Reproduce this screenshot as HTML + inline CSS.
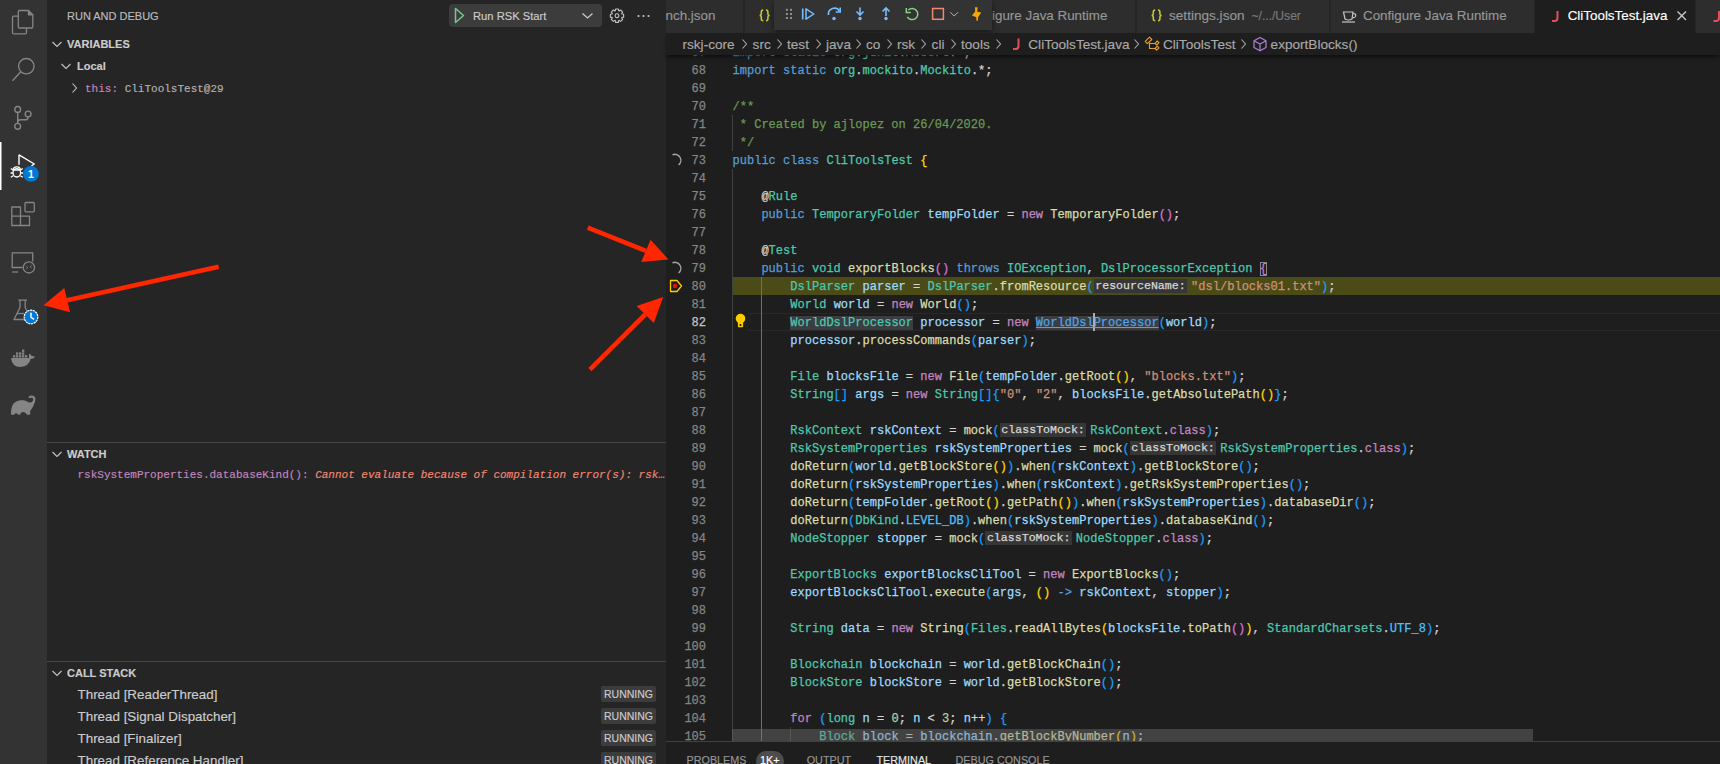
<!DOCTYPE html>
<html><head><meta charset="utf-8">
<style>
*{margin:0;padding:0;box-sizing:border-box}
html,body{width:1720px;height:764px;overflow:hidden;background:#1e1e1e;font-family:"Liberation Sans",sans-serif;color:#ccc}
.t,.tabt,.bc,.badge,.ptab{-webkit-text-stroke:0.15px currentColor}
.abs{position:absolute}
.t{position:absolute;white-space:nowrap}
svg{position:absolute;overflow:visible}
#act{left:0;top:0;width:47px;height:764px;background:#333333}
#side{left:47px;top:0;width:619px;height:764px;background:#252526}
#editor{left:666px;top:0;width:1054px;height:764px;background:#1e1e1e}
#tabs{left:666px;top:0;width:1054px;height:33px;background:#252526}
#crumbs{left:666px;top:33px;width:1054px;height:22px;background:#1e1e1e;box-shadow:0 3px 4px -1px rgba(0,0,0,.55)}
.ln{position:absolute;left:666px;width:40px;-webkit-text-stroke:0.25px currentColor;text-align:right;font-family:"Liberation Mono",monospace;font-size:12px;line-height:18px;height:18px;padding-top:1px;color:#858585}
.lnact{color:#c6c6c6}
.cl{position:absolute;left:732.5px;white-space:pre;font-family:"Liberation Mono",monospace;font-size:12px;letter-spacing:0.02px;-webkit-text-stroke:0.25px currentColor;line-height:18px;height:18px;padding-top:1px;color:#d4d4d4}
.hint{display:inline-block;background:#363636;color:#d8d8d8;height:14px;line-height:14px;font-size:11.6px;letter-spacing:0;padding:0 1.6px;margin-right:3.8px;vertical-align:top;margin-top:1px}
.whl{background:#3a3d41}
.link{text-decoration:underline}
.cur{display:inline-block;width:2px;height:18px;background:#aeafad;vertical-align:top;margin:-1px -1px 0}
.brbox{outline:1px solid #888;outline-offset:-1px}
.hdr{font-weight:bold;font-size:11px;line-height:11px;color:#cccccc}
.ui13{font-size:13.4px;line-height:13.4px}
.tab{position:absolute;top:0;height:33px;background:#2d2d2d;border-right:1px solid #252526}
.tabt{position:absolute;top:9px;font-size:13.4px;line-height:13.4px;white-space:nowrap;color:#969696}
.bc{position:absolute;top:37.5px;font-size:13.6px;line-height:13.6px;white-space:nowrap;color:#a9a9a9}
.badge{position:absolute;left:601px;width:55px;height:16px;background:#3c3c3c;border-radius:2px;font-size:10.5px;line-height:16px;text-align:center;color:#cccccc}
.ptab{position:absolute;top:754.6px;font-size:10.8px;line-height:10.8px;color:#969696;white-space:nowrap}
</style></head><body>
<div id="act" class="abs"></div>
<div id="side" class="abs"></div>
<div id="editor" class="abs"></div>

<!-- sidebar -->
<div class="t" style="left:67px;top:10.9px;font-size:11px;line-height:11px;color:#bbbbbb">RUN AND DEBUG</div>
<div class="abs" style="left:449px;top:4px;width:153px;height:23px;background:#3c3c3c;border-radius:4px"></div>
<svg style="left:0;top:0" width="1" height="1"><path d="M455.5 8.5 L463.5 15.5 L455.5 22.5 Z" fill="none" stroke="#73c991" stroke-width="1.5" stroke-linejoin="round"/></svg>
<div class="t" style="left:473px;top:6.6px;font-size:11.2px;line-height:11.2px;color:#cccccc;top:10.7px">Run RSK Start</div>
<svg style="left:0;top:0" width="1" height="1"><path d="M582.5 13.5 L587.5 18 L592.5 13.5" fill="none" stroke="#cccccc" stroke-width="1.2"/></svg>
<svg style="left:0;top:0" width="1" height="1"><g fill="none" stroke="#c5c5c5" stroke-width="1.1" stroke-linejoin="round"><circle cx="617" cy="15.7" r="1.9"/><path d="M615.30 10.79 L615.56 9.05 L618.44 9.05 L618.70 10.79 L619.27 11.02 L620.68 9.98 L622.72 12.02 L621.68 13.43 L621.91 14.00 L623.65 14.26 L623.65 17.14 L621.91 17.40 L621.68 17.97 L622.72 19.38 L620.68 21.42 L619.27 20.38 L618.70 20.61 L618.44 22.35 L615.56 22.35 L615.30 20.61 L614.73 20.38 L613.32 21.42 L611.28 19.38 L612.32 17.97 L612.09 17.40 L610.35 17.14 L610.35 14.26 L612.09 14.00 L612.32 13.43 L611.28 12.02 L613.32 9.98 L614.73 11.02 Z"/></g></svg>
<svg style="left:0;top:0" width="1" height="1"><g fill="#c5c5c5"><circle cx="638.5" cy="16" r="1.1"/><circle cx="643.5" cy="16" r="1.1"/><circle cx="648.5" cy="16" r="1.1"/></g></svg>

<svg style="left:0;top:0" width="1" height="1"><path d="M52.5 42 L57 46.5 L61.5 42" fill="none" stroke="#c5c5c5" stroke-width="1.1"/></svg>
<div class="t hdr" style="left:67px;top:38.7px">VARIABLES</div>
<svg style="left:0;top:0" width="1" height="1"><path d="M61.5 64 L66 68.5 L70.5 64" fill="none" stroke="#c5c5c5" stroke-width="1.1"/></svg>
<div class="t hdr" style="left:77px;top:60.9px">Local</div>
<svg style="left:0;top:0" width="1" height="1"><path d="M72.5 83.5 L76.5 88 L72.5 92.5" fill="none" stroke="#c5c5c5" stroke-width="1.1"/></svg>
<div class="t" style="left:85px;top:83.5px;font-family:'Liberation Mono',monospace;font-size:11px;line-height:11px"><span style="color:#c586c0">this:</span> <span style="color:#b3b3b3">CliToolsTest@29</span></div>

<div class="abs" style="left:47px;top:442px;width:619px;height:1px;background:#474747"></div>
<svg style="left:0;top:0" width="1" height="1"><path d="M52.5 452 L57 456.5 L61.5 452" fill="none" stroke="#c5c5c5" stroke-width="1.1"/></svg>
<div class="t hdr" style="left:67px;top:448.7px">WATCH</div>
<div class="t" style="left:77.5px;top:470.2px;font-family:'Liberation Mono',monospace;font-size:11px;line-height:11px"><span style="color:#c586c0">rskSystemProperties.databaseKind():</span> <span style="color:#f48771;font-style:italic">Cannot evaluate because of compilation error(s): rsk…</span></div>

<div class="abs" style="left:47px;top:661px;width:619px;height:1px;background:#474747"></div>
<svg style="left:0;top:0" width="1" height="1"><path d="M52.5 671 L57 675.5 L61.5 671" fill="none" stroke="#c5c5c5" stroke-width="1.1"/></svg>
<div class="t hdr" style="left:67px;top:668px">CALL STACK</div>
<div class="t ui13" style="left:77.5px;top:687.7px;color:#cccccc">Thread [ReaderThread]</div>
<div class="t ui13" style="left:77.5px;top:709.7px;color:#cccccc">Thread [Signal Dispatcher]</div>
<div class="t ui13" style="left:77.5px;top:731.7px;color:#cccccc">Thread [Finalizer]</div>
<div class="t ui13" style="left:77.5px;top:753.7px;color:#cccccc">Thread [Reference Handler]</div>
<div class="badge" style="top:686px">RUNNING</div>
<div class="badge" style="top:708px">RUNNING</div>
<div class="badge" style="top:730px">RUNNING</div>
<div class="badge" style="top:752px">RUNNING</div>

<div class="abs" style="left:732px;top:277px;width:988px;height:18px;background:#4b4b18"></div>
<div class="abs" style="left:748px;top:313px;width:972px;height:18px;border-top:1px solid #282828;border-bottom:1px solid #282828"></div>
<div class="abs" style="left:732px;top:115px;width:1px;height:36px;background:#404040"></div>
<div class="abs" style="left:732px;top:169px;width:1px;height:576px;background:#404040"></div>
<div class="abs" style="left:761px;top:277px;width:1px;height:468px;background:#707070"></div>
<div class="abs" style="left:790px;top:727px;width:1px;height:18px;background:#404040"></div>
<div class="ln" style="top:43px">67</div>
<div class="cl" style="top:43px"><span style="color:#569cd6">import</span><span style="color:#d4d4d4"> </span><span style="color:#569cd6">static</span><span style="color:#d4d4d4"> </span><span style="color:#4ec9b0">org</span><span style="color:#d4d4d4">.</span><span style="color:#4ec9b0">junit</span><span style="color:#d4d4d4">.</span><span style="color:#4ec9b0">Assert</span><span style="color:#d4d4d4">.*;</span></div>
<div class="ln" style="top:61px">68</div>
<div class="cl" style="top:61px"><span style="color:#569cd6">import</span><span style="color:#d4d4d4"> </span><span style="color:#569cd6">static</span><span style="color:#d4d4d4"> </span><span style="color:#4ec9b0">org</span><span style="color:#d4d4d4">.</span><span style="color:#4ec9b0">mockito</span><span style="color:#d4d4d4">.</span><span style="color:#4ec9b0">Mockito</span><span style="color:#d4d4d4">.*;</span></div>
<div class="ln" style="top:79px">69</div>
<div class="ln" style="top:97px">70</div>
<div class="cl" style="top:97px"><span style="color:#6a9955">/**</span></div>
<div class="ln" style="top:115px">71</div>
<div class="cl" style="top:115px"><span style="color:#6a9955"> * Created by ajlopez on 26/04/2020.</span></div>
<div class="ln" style="top:133px">72</div>
<div class="cl" style="top:133px"><span style="color:#6a9955"> */</span></div>
<div class="ln" style="top:151px">73</div>
<div class="cl" style="top:151px"><span style="color:#569cd6">public</span><span style="color:#d4d4d4"> </span><span style="color:#569cd6">class</span><span style="color:#d4d4d4"> </span><span style="color:#4ec9b0">CliToolsTest</span><span style="color:#d4d4d4"> </span><span style="color:#ffd700">{</span></div>
<div class="ln" style="top:169px">74</div>
<div class="ln" style="top:187px">75</div>
<div class="cl" style="top:187px"><span style="color:#d4d4d4">    @</span><span style="color:#4ec9b0">Rule</span></div>
<div class="ln" style="top:205px">76</div>
<div class="cl" style="top:205px"><span style="color:#d4d4d4">    </span><span style="color:#569cd6">public</span><span style="color:#d4d4d4"> </span><span style="color:#4ec9b0">TemporaryFolder</span><span style="color:#d4d4d4"> </span><span style="color:#9cdcfe">tempFolder</span><span style="color:#d4d4d4"> = </span><span style="color:#c586c0">new</span><span style="color:#d4d4d4"> </span><span style="color:#dcdcaa">TemporaryFolder</span><span style="color:#da70d6">()</span><span style="color:#d4d4d4">;</span></div>
<div class="ln" style="top:223px">77</div>
<div class="ln" style="top:241px">78</div>
<div class="cl" style="top:241px"><span style="color:#d4d4d4">    @</span><span style="color:#4ec9b0">Test</span></div>
<div class="ln" style="top:259px">79</div>
<div class="cl" style="top:259px"><span style="color:#d4d4d4">    </span><span style="color:#569cd6">public</span><span style="color:#d4d4d4"> </span><span style="color:#4ec9b0">void</span><span style="color:#d4d4d4"> </span><span style="color:#dcdcaa">exportBlocks</span><span style="color:#da70d6">()</span><span style="color:#d4d4d4"> </span><span style="color:#569cd6">throws</span><span style="color:#d4d4d4"> </span><span style="color:#4ec9b0">IOException</span><span style="color:#d4d4d4">, </span><span style="color:#4ec9b0">DslProcessorException</span><span style="color:#d4d4d4"> </span><span class="brbox" style="color:#da70d6">{</span></div>
<div class="ln" style="top:277px">80</div>
<div class="cl" style="top:277px"><span style="color:#d4d4d4">        </span><span style="color:#4ec9b0">DslParser</span><span style="color:#d4d4d4"> </span><span style="color:#9cdcfe">parser</span><span style="color:#d4d4d4"> = </span><span style="color:#4ec9b0">DslParser</span><span style="color:#d4d4d4">.</span><span style="color:#dcdcaa">fromResource</span><span style="color:#179fff">(</span><span class="hint">resourceName:</span><span style="color:#ce9178">&quot;dsl/blocks01.txt&quot;</span><span style="color:#179fff">)</span><span style="color:#d4d4d4">;</span></div>
<div class="ln" style="top:295px">81</div>
<div class="cl" style="top:295px"><span style="color:#d4d4d4">        </span><span style="color:#4ec9b0">World</span><span style="color:#d4d4d4"> </span><span style="color:#9cdcfe">world</span><span style="color:#d4d4d4"> = </span><span style="color:#c586c0">new</span><span style="color:#d4d4d4"> </span><span style="color:#dcdcaa">World</span><span style="color:#179fff">()</span><span style="color:#d4d4d4">;</span></div>
<div class="ln lnact" style="top:313px">82</div>
<div class="cl" style="top:313px"><span style="color:#d4d4d4">        </span><span class="whl" style="color:#4ec9b0">WorldDslProcessor</span><span style="color:#d4d4d4"> </span><span style="color:#9cdcfe">processor</span><span style="color:#d4d4d4"> = </span><span style="color:#c586c0">new</span><span style="color:#d4d4d4"> </span><span class="whl link" style="color:#4fa4e8">WorldDsl<span class="cur"></span>Processor</span><span style="color:#179fff">(</span><span style="color:#9cdcfe">world</span><span style="color:#179fff">)</span><span style="color:#d4d4d4">;</span></div>
<div class="ln" style="top:331px">83</div>
<div class="cl" style="top:331px"><span style="color:#d4d4d4">        </span><span style="color:#9cdcfe">processor</span><span style="color:#d4d4d4">.</span><span style="color:#dcdcaa">processCommands</span><span style="color:#179fff">(</span><span style="color:#9cdcfe">parser</span><span style="color:#179fff">)</span><span style="color:#d4d4d4">;</span></div>
<div class="ln" style="top:349px">84</div>
<div class="ln" style="top:367px">85</div>
<div class="cl" style="top:367px"><span style="color:#d4d4d4">        </span><span style="color:#4ec9b0">File</span><span style="color:#d4d4d4"> </span><span style="color:#9cdcfe">blocksFile</span><span style="color:#d4d4d4"> = </span><span style="color:#c586c0">new</span><span style="color:#d4d4d4"> </span><span style="color:#dcdcaa">File</span><span style="color:#179fff">(</span><span style="color:#9cdcfe">tempFolder</span><span style="color:#d4d4d4">.</span><span style="color:#dcdcaa">getRoot</span><span style="color:#ffd700">()</span><span style="color:#d4d4d4">, </span><span style="color:#ce9178">&quot;blocks.txt&quot;</span><span style="color:#179fff">)</span><span style="color:#d4d4d4">;</span></div>
<div class="ln" style="top:385px">86</div>
<div class="cl" style="top:385px"><span style="color:#d4d4d4">        </span><span style="color:#4ec9b0">String</span><span style="color:#179fff">[]</span><span style="color:#d4d4d4"> </span><span style="color:#9cdcfe">args</span><span style="color:#d4d4d4"> = </span><span style="color:#c586c0">new</span><span style="color:#d4d4d4"> </span><span style="color:#4ec9b0">String</span><span style="color:#179fff">[]{</span><span style="color:#ce9178">&quot;0&quot;</span><span style="color:#d4d4d4">, </span><span style="color:#ce9178">&quot;2&quot;</span><span style="color:#d4d4d4">, </span><span style="color:#9cdcfe">blocksFile</span><span style="color:#d4d4d4">.</span><span style="color:#dcdcaa">getAbsolutePath</span><span style="color:#ffd700">()</span><span style="color:#179fff">}</span><span style="color:#d4d4d4">;</span></div>
<div class="ln" style="top:403px">87</div>
<div class="ln" style="top:421px">88</div>
<div class="cl" style="top:421px"><span style="color:#d4d4d4">        </span><span style="color:#4ec9b0">RskContext</span><span style="color:#d4d4d4"> </span><span style="color:#9cdcfe">rskContext</span><span style="color:#d4d4d4"> = </span><span style="color:#dcdcaa">mock</span><span style="color:#179fff">(</span><span class="hint">classToMock:</span><span style="color:#4ec9b0">RskContext</span><span style="color:#d4d4d4">.</span><span style="color:#c586c0">class</span><span style="color:#179fff">)</span><span style="color:#d4d4d4">;</span></div>
<div class="ln" style="top:439px">89</div>
<div class="cl" style="top:439px"><span style="color:#d4d4d4">        </span><span style="color:#4ec9b0">RskSystemProperties</span><span style="color:#d4d4d4"> </span><span style="color:#9cdcfe">rskSystemProperties</span><span style="color:#d4d4d4"> = </span><span style="color:#dcdcaa">mock</span><span style="color:#179fff">(</span><span class="hint">classToMock:</span><span style="color:#4ec9b0">RskSystemProperties</span><span style="color:#d4d4d4">.</span><span style="color:#c586c0">class</span><span style="color:#179fff">)</span><span style="color:#d4d4d4">;</span></div>
<div class="ln" style="top:457px">90</div>
<div class="cl" style="top:457px"><span style="color:#d4d4d4">        </span><span style="color:#dcdcaa">doReturn</span><span style="color:#179fff">(</span><span style="color:#9cdcfe">world</span><span style="color:#d4d4d4">.</span><span style="color:#dcdcaa">getBlockStore</span><span style="color:#ffd700">()</span><span style="color:#179fff">)</span><span style="color:#d4d4d4">.</span><span style="color:#dcdcaa">when</span><span style="color:#179fff">(</span><span style="color:#9cdcfe">rskContext</span><span style="color:#179fff">)</span><span style="color:#d4d4d4">.</span><span style="color:#dcdcaa">getBlockStore</span><span style="color:#179fff">()</span><span style="color:#d4d4d4">;</span></div>
<div class="ln" style="top:475px">91</div>
<div class="cl" style="top:475px"><span style="color:#d4d4d4">        </span><span style="color:#dcdcaa">doReturn</span><span style="color:#179fff">(</span><span style="color:#9cdcfe">rskSystemProperties</span><span style="color:#179fff">)</span><span style="color:#d4d4d4">.</span><span style="color:#dcdcaa">when</span><span style="color:#179fff">(</span><span style="color:#9cdcfe">rskContext</span><span style="color:#179fff">)</span><span style="color:#d4d4d4">.</span><span style="color:#dcdcaa">getRskSystemProperties</span><span style="color:#179fff">()</span><span style="color:#d4d4d4">;</span></div>
<div class="ln" style="top:493px">92</div>
<div class="cl" style="top:493px"><span style="color:#d4d4d4">        </span><span style="color:#dcdcaa">doReturn</span><span style="color:#179fff">(</span><span style="color:#9cdcfe">tempFolder</span><span style="color:#d4d4d4">.</span><span style="color:#dcdcaa">getRoot</span><span style="color:#ffd700">()</span><span style="color:#d4d4d4">.</span><span style="color:#dcdcaa">getPath</span><span style="color:#ffd700">()</span><span style="color:#179fff">)</span><span style="color:#d4d4d4">.</span><span style="color:#dcdcaa">when</span><span style="color:#179fff">(</span><span style="color:#9cdcfe">rskSystemProperties</span><span style="color:#179fff">)</span><span style="color:#d4d4d4">.</span><span style="color:#dcdcaa">databaseDir</span><span style="color:#179fff">()</span><span style="color:#d4d4d4">;</span></div>
<div class="ln" style="top:511px">93</div>
<div class="cl" style="top:511px"><span style="color:#d4d4d4">        </span><span style="color:#dcdcaa">doReturn</span><span style="color:#179fff">(</span><span style="color:#4ec9b0">DbKind</span><span style="color:#d4d4d4">.</span><span style="color:#4fc1ff">LEVEL_DB</span><span style="color:#179fff">)</span><span style="color:#d4d4d4">.</span><span style="color:#dcdcaa">when</span><span style="color:#179fff">(</span><span style="color:#9cdcfe">rskSystemProperties</span><span style="color:#179fff">)</span><span style="color:#d4d4d4">.</span><span style="color:#dcdcaa">databaseKind</span><span style="color:#179fff">()</span><span style="color:#d4d4d4">;</span></div>
<div class="ln" style="top:529px">94</div>
<div class="cl" style="top:529px"><span style="color:#d4d4d4">        </span><span style="color:#4ec9b0">NodeStopper</span><span style="color:#d4d4d4"> </span><span style="color:#9cdcfe">stopper</span><span style="color:#d4d4d4"> = </span><span style="color:#dcdcaa">mock</span><span style="color:#179fff">(</span><span class="hint">classToMock:</span><span style="color:#4ec9b0">NodeStopper</span><span style="color:#d4d4d4">.</span><span style="color:#c586c0">class</span><span style="color:#179fff">)</span><span style="color:#d4d4d4">;</span></div>
<div class="ln" style="top:547px">95</div>
<div class="ln" style="top:565px">96</div>
<div class="cl" style="top:565px"><span style="color:#d4d4d4">        </span><span style="color:#4ec9b0">ExportBlocks</span><span style="color:#d4d4d4"> </span><span style="color:#9cdcfe">exportBlocksCliTool</span><span style="color:#d4d4d4"> = </span><span style="color:#c586c0">new</span><span style="color:#d4d4d4"> </span><span style="color:#dcdcaa">ExportBlocks</span><span style="color:#179fff">()</span><span style="color:#d4d4d4">;</span></div>
<div class="ln" style="top:583px">97</div>
<div class="cl" style="top:583px"><span style="color:#d4d4d4">        </span><span style="color:#9cdcfe">exportBlocksCliTool</span><span style="color:#d4d4d4">.</span><span style="color:#dcdcaa">execute</span><span style="color:#179fff">(</span><span style="color:#9cdcfe">args</span><span style="color:#d4d4d4">, </span><span style="color:#ffd700">()</span><span style="color:#d4d4d4"> </span><span style="color:#569cd6">-&gt;</span><span style="color:#d4d4d4"> </span><span style="color:#9cdcfe">rskContext</span><span style="color:#d4d4d4">, </span><span style="color:#9cdcfe">stopper</span><span style="color:#179fff">)</span><span style="color:#d4d4d4">;</span></div>
<div class="ln" style="top:601px">98</div>
<div class="ln" style="top:619px">99</div>
<div class="cl" style="top:619px"><span style="color:#d4d4d4">        </span><span style="color:#4ec9b0">String</span><span style="color:#d4d4d4"> </span><span style="color:#9cdcfe">data</span><span style="color:#d4d4d4"> = </span><span style="color:#c586c0">new</span><span style="color:#d4d4d4"> </span><span style="color:#dcdcaa">String</span><span style="color:#179fff">(</span><span style="color:#4ec9b0">Files</span><span style="color:#d4d4d4">.</span><span style="color:#dcdcaa">readAllBytes</span><span style="color:#ffd700">(</span><span style="color:#9cdcfe">blocksFile</span><span style="color:#d4d4d4">.</span><span style="color:#dcdcaa">toPath</span><span style="color:#da70d6">()</span><span style="color:#ffd700">)</span><span style="color:#d4d4d4">, </span><span style="color:#4ec9b0">StandardCharsets</span><span style="color:#d4d4d4">.</span><span style="color:#4fc1ff">UTF_8</span><span style="color:#179fff">)</span><span style="color:#d4d4d4">;</span></div>
<div class="ln" style="top:637px">100</div>
<div class="ln" style="top:655px">101</div>
<div class="cl" style="top:655px"><span style="color:#d4d4d4">        </span><span style="color:#4ec9b0">Blockchain</span><span style="color:#d4d4d4"> </span><span style="color:#9cdcfe">blockchain</span><span style="color:#d4d4d4"> = </span><span style="color:#9cdcfe">world</span><span style="color:#d4d4d4">.</span><span style="color:#dcdcaa">getBlockChain</span><span style="color:#179fff">()</span><span style="color:#d4d4d4">;</span></div>
<div class="ln" style="top:673px">102</div>
<div class="cl" style="top:673px"><span style="color:#d4d4d4">        </span><span style="color:#4ec9b0">BlockStore</span><span style="color:#d4d4d4"> </span><span style="color:#9cdcfe">blockStore</span><span style="color:#d4d4d4"> = </span><span style="color:#9cdcfe">world</span><span style="color:#d4d4d4">.</span><span style="color:#dcdcaa">getBlockStore</span><span style="color:#179fff">()</span><span style="color:#d4d4d4">;</span></div>
<div class="ln" style="top:691px">103</div>
<div class="ln" style="top:709px">104</div>
<div class="cl" style="top:709px"><span style="color:#d4d4d4">        </span><span style="color:#c586c0">for</span><span style="color:#d4d4d4"> </span><span style="color:#179fff">(</span><span style="color:#4ec9b0">long</span><span style="color:#d4d4d4"> </span><span style="color:#9cdcfe">n</span><span style="color:#d4d4d4"> = </span><span style="color:#b5cea8">0</span><span style="color:#d4d4d4">; </span><span style="color:#9cdcfe">n</span><span style="color:#d4d4d4"> &lt; </span><span style="color:#b5cea8">3</span><span style="color:#d4d4d4">; </span><span style="color:#9cdcfe">n</span><span style="color:#d4d4d4">++</span><span style="color:#179fff">)</span><span style="color:#d4d4d4"> </span><span style="color:#179fff">{</span></div>
<div class="ln" style="top:727px">105</div>
<div class="cl" style="top:727px"><span style="color:#d4d4d4">            </span><span style="color:#4ec9b0">Block</span><span style="color:#d4d4d4"> </span><span style="color:#9cdcfe">block</span><span style="color:#d4d4d4"> = </span><span style="color:#9cdcfe">blockchain</span><span style="color:#d4d4d4">.</span><span style="color:#dcdcaa">getBlockByNumber</span><span style="color:#ffd700">(</span><span style="color:#9cdcfe">n</span><span style="color:#ffd700">)</span><span style="color:#d4d4d4">;</span></div>
<svg style="left:0;top:0" width="1" height="1" ><path d="M672.5 154.8 A6 6 0 0 1 678.6 165" fill="none" stroke="#a8a8a8" stroke-width="1.4"/></svg>
<svg style="left:0;top:0" width="1" height="1" ><path d="M672.5 262.8 A6 6 0 0 1 678.6 273" fill="none" stroke="#a8a8a8" stroke-width="1.4"/></svg>
<svg style="left:0;top:0" width="1" height="1" ><path d="M670.5 280.5 L677 280.5 L681.5 286 L677 291.5 L670.5 291.5 Z" fill="none" stroke="#ffcc00" stroke-width="1.3" stroke-linejoin="round"/><circle cx="675" cy="286" r="2.2" fill="#e51400"/></svg>
<svg style="left:0;top:0" width="1" height="1" ><circle cx="740.5" cy="318.6" r="4.8" fill="#ffcc00"/><path d="M737.9 320.5 L743.1 320.5 L743.1 326 Q743.1 327.3 741.9 327.3 L739.1 327.3 Q737.9 327.3 737.9 326 Z" fill="#ffcc00"/><circle cx="740.5" cy="325" r="1.1" fill="#1e1e1e"/></svg>
<div class="abs" style="left:732px;top:729px;width:801px;height:12px;background:rgba(121,121,121,.4)"></div>

<!-- tabs -->
<div id="tabs" class="abs"></div>
<div class="tab" style="left:666px;width:78px"></div>
<div class="tabt" style="left:665.5px">nch.json</div>
<div class="tab" style="left:745px;width:186px"></div><div class="tab" style="left:931px;width:205px"></div>
<svg style="left:0;top:0" width="1" height="1" ><path d="M763.2 10 Q761.3 10 761.3 12 L761.3 14 Q761.3 15.4 759.6 15.4 Q761.3 15.4 761.3 16.8 L761.3 18.8 Q761.3 20.8 763.2 20.8 M766 10 Q767.9 10 767.9 12 L767.9 14 Q767.9 15.4 769.6 15.4 Q767.9 15.4 767.9 16.8 L767.9 18.8 Q767.9 20.8 766 20.8" fill="none" stroke="#cbcb41" stroke-width="1.5"/></svg>
<div class="tabt" style="left:992px">igure Java Runtime</div>
<div class="tab" style="left:1137px;width:193px"></div>
<svg style="left:0;top:0" width="1" height="1" ><path d="M1155.2 10 Q1153.3 10 1153.3 12 L1153.3 14 Q1153.3 15.4 1151.6 15.4 Q1153.3 15.4 1153.3 16.8 L1153.3 18.8 Q1153.3 20.8 1155.2 20.8 M1158 10 Q1159.9 10 1159.9 12 L1159.9 14 Q1159.9 15.4 1161.6 15.4 Q1159.9 15.4 1159.9 16.8 L1159.9 18.8 Q1159.9 20.8 1158 20.8" fill="none" stroke="#cbcb41" stroke-width="1.5"/></svg>
<div class="tabt" style="left:1169px;font-size:13.6px">settings.json</div>
<div class="tabt" style="left:1251.5px;font-size:12.1px;top:10px;color:#7a7a7a">~/.../User</div>
<div class="tab" style="left:1331px;width:204px"></div>
<svg style="left:0;top:0" width="1" height="1" ><g fill="none" stroke="#c5c5c5" stroke-width="1.2"><path d="M1343.5 12 L1353 12 L1352 19 Q1348.5 21 1345 19 Z"/><path d="M1353 13.5 Q1356.5 13.5 1355.5 16.5 Q1354.5 18 1352.3 17.5"/><path d="M1342 22 L1355 22"/></g></svg>
<div class="tabt" style="left:1363px">Configure Java Runtime</div>
<div class="tab" style="left:1535px;width:160px;background:#1e1e1e;border-right:none"></div>
<svg style="left:0;top:0" width="1" height="1" ><path d="M1557.5 11 L1557.5 18 Q1557.5 21 1554.5 21 L1552 21" fill="none" stroke="#e44e5a" stroke-width="2"/></svg>
<div class="tabt" style="left:1567.7px;color:#ffffff">CliToolsTest.java</div>
<svg style="left:0;top:0" width="1" height="1" ><path d="M1677.5 11.5 L1686 20 M1686 11.5 L1677.5 20" stroke="#cccccc" stroke-width="1.3"/></svg>
<div class="tab" style="left:1696px;width:30px"></div>
<svg style="left:0;top:0" width="1" height="1" ><path d="M1719 11 L1719 18 Q1719 21 1716 21 L1713.5 21" fill="none" stroke="#e44e5a" stroke-width="2"/></svg>
<div class="abs" style="left:774px;top:0;width:218px;height:30px;background:#333333;box-shadow:0 2px 6px rgba(0,0,0,.5)"></div>
<svg style="left:0;top:0" width="1" height="1" ><rect x="785.9" y="8.8" width="2" height="2" fill="#8f8f8f"/><rect x="785.9" y="13" width="2" height="2" fill="#8f8f8f"/><rect x="785.9" y="17" width="2" height="2" fill="#8f8f8f"/><rect x="790" y="8.8" width="2" height="2" fill="#8f8f8f"/><rect x="790" y="13" width="2" height="2" fill="#8f8f8f"/><rect x="790" y="17" width="2" height="2" fill="#8f8f8f"/><path d="M802.7 8.5 L802.7 19.5" stroke="#75beff" stroke-width="1.6"/><path d="M806 8.8 L813.8 14 L806 19.2 Z" fill="none" stroke="#75beff" stroke-width="1.5" stroke-linejoin="round"/><path d="M828.5 15 A6 6 0 0 1 839.5 11" fill="none" stroke="#75beff" stroke-width="1.6"/><path d="M840.2 7.5 L840.2 12 L835.7 12" fill="none" stroke="#75beff" stroke-width="1.6"/><circle cx="834" cy="18.5" r="1.7" fill="#75beff"/><path d="M860 7.5 L860 14.5 M856.5 11.5 L860 15 L863.5 11.5" fill="none" stroke="#75beff" stroke-width="1.6"/><circle cx="860" cy="18.5" r="1.7" fill="#75beff"/><path d="M886 16 L886 8 M882.5 11.5 L886 8 L889.5 11.5" fill="none" stroke="#75beff" stroke-width="1.6"/><circle cx="886" cy="18.5" r="1.7" fill="#75beff"/><path d="M907.35 16.8 A5.6 5.6 0 1 0 908.24 10.04" fill="none" stroke="#89d185" stroke-width="1.5"/><path d="M906.3 8 L906.3 12.6 L910.8 12.6" fill="none" stroke="#89d185" stroke-width="1.5"/><rect x="932.6" y="8.5" width="10.8" height="10.8" fill="none" stroke="#f48771" stroke-width="1.5"/><path d="M950.3 12.2 L954.2 16 L958 12.2" fill="none" stroke="#c5c5c5" stroke-width="0.9"/><path d="M975 7.2 L977.6 7.2 L977.2 11.8 L981.2 12.6 L978.2 17 L977.8 20.8 L976.4 20.8 L976.3 17.2 L972 15.6 L975.2 11.6 Z" fill="#f5a800"/></svg>
<div id="crumbs" class="abs"></div>
<div class="bc" style="left:682.5px">rskj-core</div>
<div class="bc" style="left:752.6px">src</div>
<div class="bc" style="left:787px">test</div>
<div class="bc" style="left:826px">java</div>
<div class="bc" style="left:866px">co</div>
<div class="bc" style="left:897px">rsk</div>
<div class="bc" style="left:931.6px">cli</div>
<div class="bc" style="left:961px">tools</div>
<svg style="left:0;top:0" width="1" height="1" ><path d="M742.5 39.5 L746.5 44 L742.5 48.5" fill="none" stroke="#a9a9a9" stroke-width="1.1"/><path d="M777.5 39.5 L781.5 44 L777.5 48.5" fill="none" stroke="#a9a9a9" stroke-width="1.1"/><path d="M816.5 39.5 L820.5 44 L816.5 48.5" fill="none" stroke="#a9a9a9" stroke-width="1.1"/><path d="M856.5 39.5 L860.5 44 L856.5 48.5" fill="none" stroke="#a9a9a9" stroke-width="1.1"/><path d="M887.5 39.5 L891.5 44 L887.5 48.5" fill="none" stroke="#a9a9a9" stroke-width="1.1"/><path d="M921.5 39.5 L925.5 44 L921.5 48.5" fill="none" stroke="#a9a9a9" stroke-width="1.1"/><path d="M951.5 39.5 L955.5 44 L951.5 48.5" fill="none" stroke="#a9a9a9" stroke-width="1.1"/><path d="M996.5 39.5 L1000.5 44 L996.5 48.5" fill="none" stroke="#a9a9a9" stroke-width="1.1"/><path d="M1134.5 39.5 L1138.5 44 L1134.5 48.5" fill="none" stroke="#a9a9a9" stroke-width="1.1"/><path d="M1241.5 39.5 L1245.5 44 L1241.5 48.5" fill="none" stroke="#a9a9a9" stroke-width="1.1"/><path d="M1018.5 38.5 L1018.5 46 Q1018.5 49 1015.5 49 L1013 49" fill="none" stroke="#e44e5a" stroke-width="2"/><g fill="none" stroke="#ee9d28" stroke-width="1.1" stroke-linejoin="round"><path d="M1145.2 41.4 L1149.5 37.2 L1151.8 39.5 L1147.3 43.7 Z"/><path d="M1149.5 42.5 L1149.5 48.5 L1155 48.5 M1149.5 43.5 L1155 43.5"/><path d="M1155 43.3 L1157.3 41 L1159 42.7 L1156.7 45 Z"/><path d="M1155 48.5 L1157.3 46.2 L1159 47.9 L1156.7 50.2 Z"/></g><g fill="none" stroke="#b180d7" stroke-width="1.2" stroke-linejoin="round"><path d="M1260 37.5 L1266 40.8 L1266 47.5 L1260 50.8 L1254 47.5 L1254 40.8 Z"/><path d="M1254 40.8 L1260 44 L1266 40.8 M1260 44 L1260 50.8"/></g></svg>
<div class="bc" style="left:1028.3px">CliToolsTest.java</div>
<div class="bc" style="left:1163px">CliToolsTest</div>
<div class="bc" style="left:1270.6px">exportBlocks()</div>

<!-- panel -->
<div class="abs" style="left:666px;top:741px;width:1054px;height:23px;background:#1e1e1e;border-top:1px solid #414141"></div>
<div class="ptab" style="left:686.5px">PROBLEMS</div>
<div class="abs" style="left:756px;top:751px;width:27.5px;height:20px;border-radius:10px;background:#4d4d4d"></div>
<div class="ptab" style="left:760px;color:#ffffff">1K+</div>
<div class="ptab" style="left:806.7px">OUTPUT</div>
<div class="ptab" style="left:876.5px;color:#e7e7e7">TERMINAL</div>
<div class="ptab" style="left:955.5px">DEBUG CONSOLE</div>

<svg style="left:0;top:0" width="1" height="1" ><g fill="none" stroke="#858585" stroke-width="1.3" stroke-linejoin="round"><path d="M19.5 10.5 L28.5 10.5 L32.8 14.8 L32.8 26.8 Q32.8 28 31.6 28 L19.5 28 Q18.3 28 18.3 26.8 L18.3 11.7 Q18.3 10.5 19.5 10.5 Z"/><path d="M28.5 10.5 L28.5 14.8 L32.8 14.8" fill="#858585"/><path d="M18.3 16.2 L13.7 16.2 Q12.5 16.2 12.5 17.4 L12.5 32.6 Q12.5 33.8 13.7 33.8 L25.3 33.8 Q26.5 33.8 26.5 32.6 L26.5 28"/></g><g fill="none" stroke="#858585" stroke-width="1.4"><circle cx="26.3" cy="66.2" r="7.7"/><path d="M20.8 71.8 L12.5 80.8"/></g><g fill="none" stroke="#858585" stroke-width="1.4"><circle cx="17.7" cy="109.4" r="2.9"/><circle cx="28.1" cy="114" r="2.9"/><circle cx="17.7" cy="126.3" r="2.9"/><path d="M17.7 112.3 L17.7 123.4 M28.1 116.9 Q28.1 119.8 25 119.8 L20.5 119.8 Q17.7 119.8 17.7 122.5"/></g><rect x="0" y="142" width="1.5" height="48" fill="#ffffff"/><g fill="none" stroke="#ffffff" stroke-width="1.4" stroke-linejoin="round"><path d="M19 154.8 L34.3 164 L31.5 165.8"/><path d="M19 154.8 L19 164.8"/></g><g fill="none" stroke="#ffffff" stroke-width="1.3"><path d="M13.2 170 Q13.2 166.8 16.8 166.8 Q20.4 166.8 20.4 170 Z"/><ellipse cx="16.8" cy="172.8" rx="3.8" ry="4.2"/><path d="M10.8 168.5 L13 170 M22.8 168.5 L20.6 170 M10.6 173 L13 173 M20.6 173 L23 173 M10.8 177.2 L13.2 175.7 M22.8 177.2 L20.4 175.7"/></g><circle cx="30.9" cy="173.8" r="7.9" fill="#0078d4"/><text x="30.9" y="177.6" font-size="10.5" font-weight="bold" fill="#fff" text-anchor="middle" font-family="Liberation Sans">1</text><g fill="none" stroke="#858585" stroke-width="1.3" stroke-linejoin="round"><path d="M11.8 207 L20.5 207 L20.5 216.2 L29.5 216.2 L29.5 225.5 L11.8 225.5 Z M11.8 216.2 L20.5 216.2 L20.5 225.5"/><rect x="25" y="202.5" width="9.3" height="9.3" rx="1"/></g><g fill="none" stroke="#858585" stroke-width="1.3"><path d="M22.5 267.5 L12.2 267.5 L12.2 252.8 L32.7 252.8 L32.7 261.5"/><path d="M12.2 272 L18 272"/><circle cx="28.9" cy="267.4" r="5.6"/><path d="M26.3 266.3 L27.8 267.6 L26.3 268.9 M31.5 265.3 L30 266.6 L31.5 267.9" stroke-width="0.9"/></g><g fill="none" stroke="#858585" stroke-width="1.3" stroke-linejoin="round"><path d="M18.3 300.2 L27 300.2 M20 300.2 L20 307.5 L14 319.5 L25 319.5 M25.2 300.2 L25.2 307.5 L27.5 312"/><path d="M17 313.5 L24 313.5"/></g><circle cx="31" cy="317" r="6.8" fill="#0078d4" stroke="#fff" stroke-width="1.2" stroke-dasharray="2.2 0.6"/><path d="M31 312.8 L31 317.3 L34 319.3" fill="none" stroke="#fff" stroke-width="1.5"/><g fill="#858585"><path d="M11 358 L31 358 Q29 366.5 20.5 367 Q12 367 11 358 Z"/><path d="M29 358.5 L29 354 Q30.5 353.5 31 355 L31.5 356 Q33.5 355.5 35 357 Q33.5 359 30.5 359 Z"/><rect x="13" y="355.2" width="2.3" height="2.3"/><rect x="16" y="355.2" width="2.3" height="2.3"/><rect x="19" y="355.2" width="2.3" height="2.3"/><rect x="22" y="355.2" width="2.3" height="2.3"/><rect x="25" y="355.2" width="2.3" height="2.3"/><rect x="16" y="352.4" width="2.3" height="2.3"/><rect x="19" y="352.4" width="2.3" height="2.3"/><rect x="22" y="352.4" width="2.3" height="2.3"/><rect x="22" y="349.6" width="2.3" height="2.3"/></g><path d="M11 414.7 C11 409 12 403.5 15.5 402 C18 400 24 399.5 27 401.5 C29 403 31 403 32.8 401 L34.6 402 C34 406 31.5 409 30.2 411 L30.2 414.7 L27 414.7 C26 413 24 411.5 22.5 412 C21 412.5 20.5 414 20 414.7 L18 414.7 C17.5 413.5 16.5 413 15.7 413.2 C15 413.5 14.5 414.2 14 414.7 Z" fill="#858585"/><path d="M32.5 404 C35 401 35 397 32.2 396.6 C30.6 396.3 29.6 397 29.6 398" fill="none" stroke="#858585" stroke-width="2.2"/></svg>
<svg style="left:0;top:0" width="1" height="1" ><path d="M218.7 266.8 L67.19999999999999 300.15" stroke="#ff2600" stroke-width="4.6" stroke-linecap="butt"/><path d="M43.4 305.2 L64.3 288.1 L70.1 312.2 Z" fill="#ff2600"/><path d="M587.8 227.6 L645.9000000000001 250.9" stroke="#ff2600" stroke-width="4.6" stroke-linecap="butt"/><path d="M668.4 259.4 L650.6 239.7 L641.2 262.1 Z" fill="#ff2600"/><path d="M589.9 369.6 L645.2 314.5" stroke="#ff2600" stroke-width="4.6" stroke-linecap="butt"/><path d="M663.2 297.1 L636.6 306.1 L653.8 322.9 Z" fill="#ff2600"/></svg>
</body></html>
